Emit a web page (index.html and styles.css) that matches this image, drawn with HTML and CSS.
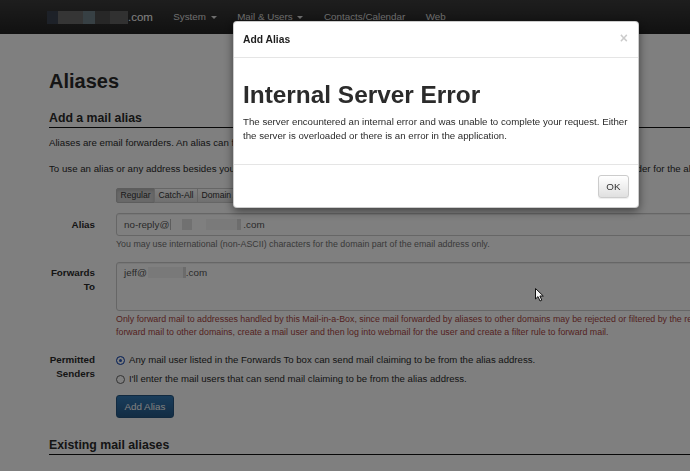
FILE: index.html
```html
<!DOCTYPE html>
<html lang="en">
<head>
<meta charset="utf-8">
<title>Aliases</title>
<link rel="stylesheet" href="styles.css">
</head>
<body>
<nav class="navbar">
  <div class="nav-inner">
    <a class="brand"><span class="blur-domain"><i class="nb nb1"></i><i class="nb nb2"></i><i class="nb nb3"></i><i class="nb nb4"></i><i class="nb nb5"></i></span>.com</a>
    <ul class="nav-links">
      <li>System <span class="caret"></span></li>
      <li>Mail &amp; Users <span class="caret"></span></li>
      <li>Contacts/Calendar</li>
      <li>Web</li>
    </ul>
  </div>
</nav>

<main class="container">
  <h1 class="page-title">Aliases</h1>
  <h2 class="section-title">Add a mail alias</h2>
  <p class="intro">Aliases are email forwarders. An alias can forward email to a mail user or to any email address.</p>
  <p class="intro nowrap">To use an alias or any address besides your own login username in outbound mail, the sending user must be included as a permitted sender for the alias address.</p>

  <form class="alias-form">
    <div class="form-row tabs-row">
      <div></div>
      <div class="btn-group">
        <span class="btn-xs active">Regular</span>
        <span class="btn-xs">Catch-All</span>
        <span class="btn-xs">Domain Alias</span>
      </div>
    </div>

    <div class="form-row alias-row">
      <label class="row-label">Alias</label>
      <div class="control">
        <div class="form-control input">no-reply@<i class="blk b-bar"></i><i class="blk b-gap11"></i><i class="blk b-dark10"></i><i class="blk b-gap14"></i><i class="blk b-light31"></i><i class="blk b-dark4"></i>.com</div>
        <div class="help">You may use international (non-ASCII) characters for the domain part of the email address only.</div>
      </div>
    </div>

    <div class="form-row forwards-row">
      <label class="row-label multi">Forwards<br>To</label>
      <div class="control">
        <div class="form-control textarea">jeff@<i class="blk b-light35"></i><i class="blk b-dark3"></i>.com</div>
        <div class="help warn">Only forward mail to addresses handled by this Mail-in-a-Box, since mail forwarded by aliases to other domains may be rejected or filtered by the receiving mail server. To<br>forward mail to other domains, create a mail user and then log into webmail for the user and create a filter rule to forward mail.</div>
      </div>
    </div>

    <div class="form-row senders-row">
      <label class="row-label multi">Permitted<br>Senders</label>
      <div class="control">
        <label class="radio"><input type="radio" name="senders" checked> Any mail user listed in the Forwards To box can send mail claiming to be from the alias address.</label>
        <label class="radio second"><input type="radio" name="senders"> I'll enter the mail users that can send mail claiming to be from the alias address.</label>
        <button type="button" class="btn-primary">Add Alias</button>
      </div>
    </div>
  </form>

  <h2 class="section-title existing">Existing mail aliases</h2>
</main>

<div class="backdrop"></div>

<div class="modal">
  <div class="modal-header">
    <span class="modal-title">Add Alias</span>
    <span class="close">&times;</span>
  </div>
  <div class="modal-body">
    <h1 class="error-title">Internal Server Error</h1>
    <p>The server encountered an internal error and was unable to complete your request. Either the server is overloaded or there is an error in the application.</p>
  </div>
  <div class="modal-footer">
    <button type="button" class="btn-default">OK</button>
  </div>
</div>

<svg class="cursor" width="10" height="14" viewBox="0 0 10 14"><path d="M0.5 0.5 L0.5 11 L3 8.6 L5 13 L6.8 12.2 L4.9 8 L8.3 8 Z" fill="#f4f4f4" stroke="#111" stroke-width="1" stroke-linejoin="round"/></svg>
</body>
</html>
```

FILE: styles.css
```css
* { box-sizing: border-box; }

html, body { margin: 0; padding: 0; }

body {
  font-family: "Liberation Sans", Arial, sans-serif;
  font-size: 9.8px;
  line-height: 14px;
  color: #2b2b2b;
  background: #fff;
  width: 690px;
  height: 471px;
  overflow: hidden;
}

/* navbar */
.navbar {
  height: 34px;
  background: linear-gradient(#3c3c3c, #222);
}
.nav-inner {
  display: flex;
  align-items: center;
  height: 34px;
  padding-left: 37px;
}
.brand {
  display: flex;
  align-items: center;
  padding: 0 10px;
  font-size: 11.5px;
  color: #fff;
}
.blur-domain { display: flex; height: 13px; }
.nb { display: block; height: 13px; }
.nb1 { width: 11px; background: #3a4350; }
.nb2 { width: 25px; background: #6a6a6a; }
.nb3 { width: 12px; background: #6e8088; }
.nb4 { width: 15px; background: #4e4e4e; }
.nb5 { width: 18px; background: #626262; }
.nav-links {
  display: flex;
  list-style: none;
  margin: 0;
  padding: 0;
}
.nav-links li {
  padding: 0 10.3px;
  color: #dcdcdc;
  font-size: 9.8px;
}
.caret {
  display: inline-block;
  width: 0;
  height: 0;
  margin-left: 2px;
  vertical-align: middle;
  border-top: 3px solid;
  border-left: 3px solid transparent;
  border-right: 3px solid transparent;
}

/* page */
.container {
  width: 1100px;
  padding-left: 49px;
}
.page-title {
  font-size: 20px;
  line-height: 22px;
  font-weight: bold;
  margin: 36px 0 0;
  color: #2b2b2b;
}
.section-title {
  font-size: 12.3px;
  line-height: 14px;
  font-weight: bold;
  margin: 19px 0 0;
  padding-bottom: 2px;
  border-bottom: 1px solid #111;
  color: #2b2b2b;
}
.section-title.existing { margin-top: 20px; }
.intro { margin: 8px 0 0; font-size: 9.7px; }
.intro + .intro { margin-top: 12px; }
.nowrap { white-space: nowrap; }

.form-row {
  display: grid;
  grid-template-columns: 67px 1fr;
}
.tabs-row { margin-top: 12px; }
.alias-row { margin-top: 10px; }
.forwards-row { margin-top: 11px; }
.senders-row { margin-top: 14px; }

.btn-group { display: flex; }
.btn-xs {
  display: block;
  height: 15px;
  padding: 0 3.5px;
  font-size: 8.6px;
  line-height: 13px;
  border: 1px solid #ccc;
  background: linear-gradient(#fff, #e0e0e0);
  color: #333;
}
.btn-xs + .btn-xs { margin-left: -1px; }
.btn-xs:first-child { border-radius: 2px 0 0 2px; }
.btn-xs.active {
  background: #d2d2d2;
  box-shadow: inset 0 2px 3px rgba(0, 0, 0, .125);
  border-color: #bbb;
}

.row-label {
  text-align: right;
  padding-right: 21px;
  font-weight: bold;
  line-height: 23px;
}
.row-label.multi { line-height: 14px; padding-top: 4px; }
.senders-row .row-label.multi { padding-top: 0; }

.form-control {
  display: block;
  border: 1px solid #ccc;
  border-radius: 3px;
  background: #fff;
  color: #555;
  padding: 0 7px;
  box-shadow: inset 0 1px 1px rgba(0, 0, 0, .075);
  white-space: nowrap;
}
.input { height: 23px; line-height: 21px; }
.textarea { height: 49px; padding-top: 3px; line-height: 14px; }

.blk { display: inline-block; height: 11px; vertical-align: -2px; }
.b-bar { width: 1px; margin-left: 1px; background: #bbb; }
.b-gap11 { width: 11px; }
.b-dark10 { width: 10px; background: #e2e2e2; }
.b-gap14 { width: 14px; }
.b-light31 { width: 31px; background: #f4f4f4; }
.b-dark4 { width: 4px; margin-right: 2px; background: #dadada; }
.b-light35 { width: 35px; margin-left: 1px; background: #f3f3f3; }
.b-dark3 { width: 3px; background: #d6d6d6; }

.help {
  margin-top: 1px;
  font-size: 8.85px;
  line-height: 14px;
  color: #737373;
  white-space: nowrap;
}
.help.warn {
  margin-top: 2px;
  line-height: 13px;
  color: #a94442;
}

.radio {
  display: flex;
  align-items: center;
  gap: 4px;
  font-size: 9.6px;
  line-height: 14px;
  white-space: nowrap;
}
.radio.second { margin-top: 5px; }
.radio input {
  appearance: none;
  -webkit-appearance: none;
  margin: 0;
  width: 9px;
  height: 9px;
  border-radius: 50%;
  border: 1px solid #666;
  background: #fff;
  flex: none;
}
.radio input:checked {
  border-color: #2c58b8;
  background: #2c58b8;
  box-shadow: inset 0 0 0 2px #fff;
}

.btn-primary {
  display: block;
  margin-top: 9px;
  height: 23px;
  padding: 0 7.5px;
  font-family: inherit;
  font-size: 9.8px;
  color: #fff;
  border: 1px solid #245580;
  border-radius: 3px;
  background: linear-gradient(#337ab7, #265a88);
}

/* modal */
.backdrop {
  position: fixed;
  inset: 0;
  background: rgba(0, 0, 0, .5);
}
.modal {
  position: fixed;
  top: 21px;
  left: 233px;
  width: 406px;
  background: #fff;
  border: 1px solid rgba(0, 0, 0, .2);
  border-radius: 4px;
  box-shadow: 0 3px 10px rgba(0, 0, 0, .5);
}
.modal-header {
  display: flex;
  justify-content: space-between;
  align-items: flex-start;
  padding: 10px 9px;
  border-bottom: 1px solid #e5e5e5;
}
.modal-title {
  font-size: 10.3px;
  line-height: 15px;
  font-weight: bold;
  color: #1e1e1e;
}
.close {
  font-size: 14px;
  line-height: 14px;
  font-weight: bold;
  color: #000;
  opacity: .2;
  margin-top: -1px;
  margin-right: 1px;
}
.modal-body { padding: 9px 9px 11px; }
.error-title {
  font-size: 24.4px;
  line-height: 27px;
  font-weight: bold;
  margin: 14px 0 0;
  color: #2b2b2b;
}
.modal-body p {
  margin: 7px 0 10px;
  font-size: 9.7px;
  line-height: 14px;
  color: #2b2b2b;
}
.modal-footer {
  padding: 10px 9px 9px;
  border-top: 1px solid #e5e5e5;
  text-align: right;
}
.btn-default {
  height: 23px;
  padding: 0 7.5px;
  font-family: inherit;
  font-size: 9.8px;
  color: #333;
  border: 1px solid #ccc;
  border-radius: 3px;
  background: linear-gradient(#fff, #e0e0e0);
  box-shadow: 0 1px 1px rgba(0, 0, 0, .075);
}

.cursor {
  position: fixed;
  left: 535px;
  top: 288px;
}
```
